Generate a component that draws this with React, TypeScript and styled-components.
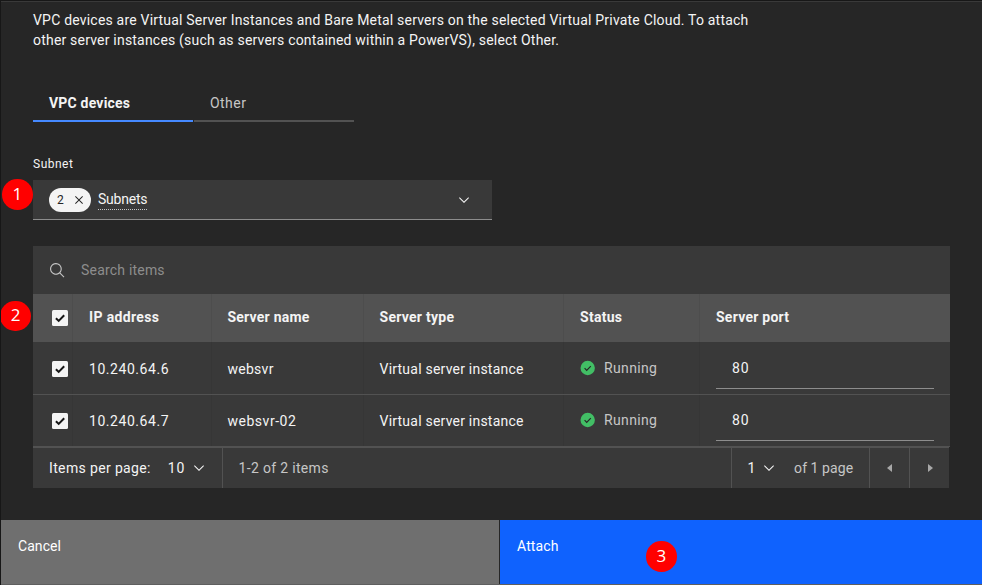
import React from "react";
import styled, { createGlobalStyle } from "styled-components";

const GlobalStyle = createGlobalStyle`
  *, *::before, *::after { box-sizing: border-box; }
  body {
    margin: 0;
    background: #262626;
    color: #f4f4f4;
    font-family: Roboto, "Liberation Sans", sans-serif;
    font-size: 14px;
    line-height: 20px;
  }
  button, input { font: inherit; color: inherit; }
`;

const Panel = styled.main`
  position: relative;
  display: flex;
  flex-direction: column;
  width: 982px;
  height: 585px;
  overflow: hidden;
  background: #262626;
  border-left: 1px solid #171717;
  border-top: 1px solid #171717;
`;

const Content = styled.section`
  flex: 1;
  padding: 8px 32px 0;
  border-top: 1px solid #393939;
`;

const Text = styled.span<{ $track?: number; $muted?: boolean }>`
  letter-spacing: ${(p) => p.$track ?? 0.2}px;
  color: ${(p) => (p.$muted ? "#c6c6c6" : "inherit")};
  white-space: nowrap;
`;

const Description = styled.p`
  margin: 0;
  letter-spacing: 0.2px;
  white-space: nowrap;
`;

const Tabs = styled.nav`
  display: flex;
  gap: 1px;
  margin-top: 32px;
`;

const Tab = styled.button<{ $active?: boolean }>`
  width: 160px;
  height: 40px;
  padding: 3px 16px 0;
  text-align: left;
  background: none;
  border: 0;
  border-bottom: 2px solid ${(p) => (p.$active ? "#4589ff" : "#525252")};
  color: ${(p) => (p.$active ? "#f4f4f4" : "#c6c6c6")};
  font-weight: ${(p) => (p.$active ? 700 : 400)};
`;

const FieldLabel = styled.label`
  display: block;
  margin: 34px 0 8px;
  font-size: 12px;
  line-height: 16px;
  letter-spacing: 0.5px;
`;

const Select = styled.div`
  display: flex;
  align-items: center;
  width: 459px;
  height: 40px;
  padding: 0 20px 0 16px;
  background: #393939;
  border-bottom: 1px solid #8d8d8d;
`;

const Tag = styled.span`
  display: flex;
  align-items: center;
  justify-content: space-between;
  width: 42px;
  height: 24px;
  margin-right: 7px;
  padding: 0 4px 0 8px;
  border-radius: 12px;
  background: #f4f4f4;
  color: #262626;
  font-size: 12px;
`;

const SelectValue = styled(Text)`
  flex: 1;
  span {
    display: inline-block;
    height: 20px;
    line-height: 18px;
    border-bottom: 1px dotted #c6c6c6;
  }
`;

const TableBox = styled.div`
  width: 917px;
  margin-top: 26px;
`;

const SearchBar = styled.div`
  display: flex;
  align-items: center;
  gap: 15px;
  height: 48px;
  padding: 0 16px;
  background: #393939;
  color: #8d8d8d;
  svg { color: #c6c6c6; }
`;

const Row = styled.div<{ $head?: boolean; $height: number }>`
  display: grid;
  grid-template-columns: 40px 139px 152px 200px 136px 250px;
  height: ${(p) => p.$height}px;
  background: ${(p) => (p.$head ? "#525252" : "#393939")};
  border-bottom: ${(p) => (p.$head ? "0" : "1px solid #525252")};
  font-weight: ${(p) => (p.$head ? 700 : 400)};
`;

const Cell = styled.div<{ $head?: boolean; $last?: boolean; $drop?: number; $lift?: number; $pull?: number }>`
  display: flex;
  align-items: center;
  gap: 8px;
  padding: ${(p) => p.$drop ?? 0}px 0 ${(p) => p.$lift ?? (p.$head ? 2 : 0)}px ${(p) => 16 - (p.$pull ?? 0)}px;
  border-right: ${(p) => (p.$last ? "0" : `1px solid ${p.$head ? "#4d4d4d" : "#363636"}`)};
`;

const CheckCell = styled(Cell)`
  padding-left: 19px;
  padding-bottom: 0;
`;

const CheckMark = styled.span`
  display: flex;
  width: 16px;
  height: 16px;
  flex: none;
  border-radius: 1.5px;
  background: #f4f4f4;
  color: #161616;
`;

const PortInput = styled.input`
  width: 218px;
  height: 40px;
  padding: 0 16px 1px;
  background: #393939;
  border: 0;
  border-bottom: 1px solid #8d8d8d;
  border-radius: 0;
  outline: 0;
  letter-spacing: 0.9px;
`;

const Pagination = styled.div`
  display: flex;
  width: 916px;
  height: 41px;
  background: #393939;
  border-top: 1px solid #525252;
`;

const PageSection = styled.div<{ $width?: number; $left?: number; $divided?: boolean }>`
  display: flex;
  align-items: center;
  flex: ${(p) => (p.$width ? "none" : 1)};
  width: ${(p) => (p.$width ? `${p.$width}px` : "auto")};
  padding: 0 0 0 ${(p) => p.$left ?? 0}px;
  border-left: ${(p) => (p.$divided ? "1px solid #525252" : "0")};
`;

const PageSelect = styled.span<{ $before: number; $gap: number }>`
  display: flex;
  align-items: center;
  gap: ${(p) => p.$gap}px;
  margin-left: ${(p) => p.$before}px;
`;

const PageTotal = styled(Text)`
  margin-left: 17px;
`;

const PageButton = styled.button`
  display: flex;
  align-items: center;
  justify-content: center;
  width: 40px;
  padding: 0;
  background: none;
  border: 0;
  border-left: 1px solid #525252;
  color: #a8a8a8;
`;

const Footer = styled.footer`
  display: flex;
  gap: 1px;
  height: 65px;
  border-bottom: 1px solid #5f5f5f;
`;

const ActionButton = styled.button<{ $primary?: boolean }>`
  display: flex;
  flex: ${(p) => (p.$primary ? 1 : "none")};
  width: ${(p) => (p.$primary ? "auto" : "498px")};
  padding: 16px 17px;
  border: 0;
  color: #fff;
  background: ${(p) => (p.$primary ? "#0f62fe" : "#6f6f6f")};
`;

const Callout = styled.span<{ $x: number; $y: number }>`
  position: absolute;
  left: ${(p) => p.$x}px;
  top: ${(p) => p.$y}px;
  display: flex;
  align-items: center;
  justify-content: center;
  width: 30.6px;
  height: 30.6px;
  padding-bottom: 2px;
  border-radius: 50%;
  background: #ff0000;
  color: #fff;
  font: 17px/1 "Open Sans", "Noto Sans", sans-serif;
`;

const Icon = ({ d, size = 16, box = 32 }: { d: string; size?: number; box?: number }) => (
  <svg width={size} height={size} viewBox={`0 0 ${box} ${box}`} fill="currentColor">
    <path d={d} />
  </svg>
);

const CHEVRON = "M8 11L3 6 3.7 5.3 8 9.6 12.3 5.3 13 6z";
const CLOSE =
  "M24 9.4L22.6 8 16 14.6 9.4 8 8 9.4 14.6 16 8 22.6 9.4 24 16 17.4 22.6 24 24 22.6 17.4 16 24 9.4z";
const SEARCH =
  "M29,27.5859l-7.5521-7.5521a11.0177,11.0177,0,1,0-1.4141,1.4141L27.5859,29ZM4,13a9,9,0,1,1,9,9A9.01,9.01,0,0,1,4,13Z";
const CARET_LEFT = "M20 24L10 16 20 8z";
const CARET_RIGHT = "M12 8L22 16 12 24z";

const Check = () => (
  <CheckMark role="checkbox" aria-checked="true">
    <svg width="16" height="16" viewBox="0 0 16 16" fill="none" stroke="currentColor" strokeWidth="2">
      <path d="M3.9 8.2L6.7 10.9L12.2 5.2" />
    </svg>
  </CheckMark>
);

const RunningIcon = () => (
  <svg width="16" height="16" viewBox="0 0 16 16" fill="none">
    <circle cx="7.7" cy="8" r="7.2" fill="#42be65" />
    <path d="M4.6 8.2L6.7 10.3L10.8 6.2" stroke="#262626" strokeWidth="1.2" />
  </svg>
);

const servers = [
  { ip: "10.240.64.6", name: "websvr", track: 0.29, height: 53, statusLift: 0, portDrop: 2 },
  { ip: "10.240.64.7", name: "websvr-02", track: 0.54, height: 52, statusLift: 1, portDrop: 1 },
];

export default function App() {
  return (
    <>
      <GlobalStyle />
      <Panel>
        <Content>
          <Description>
            VPC devices are Virtual Server Instances and Bare Metal servers on the selected Virtual Private Cloud. To attach
            <br />
            other server instances (such as servers contained within a PowerVS), select Other.
          </Description>
          <Tabs>
            <Tab $active><Text>VPC devices</Text></Tab>
            <Tab><Text $track={0.45}>Other</Text></Tab>
          </Tabs>
          <FieldLabel>Subnet</FieldLabel>
          <Select>
            <Tag><span>2</span><Icon d={CLOSE} /></Tag>
            <SelectValue $track={-0.22}><span>Subnets</span></SelectValue>
            <Icon d={CHEVRON} box={16} />
          </Select>

          <TableBox>
            <SearchBar>
              <Icon d={SEARCH} size={17} />
              <Text>Search items</Text>
            </SearchBar>
            <Row $head $height={48}>
              <CheckCell $head><Check /></CheckCell>
              <Cell $head><Text $track={0.35}>IP address</Text></Cell>
              <Cell $head $pull={0.6}><Text $track={0.24}>Server name</Text></Cell>
              <Cell $head $pull={0.5}><Text $track={0.27}>Server type</Text></Cell>
              <Cell $head><Text $track={0.27}>Status</Text></Cell>
              <Cell $head $last><Text $track={0.24}>Server port</Text></Cell>
            </Row>
            {servers.map((s) => (
              <Row key={s.ip} $height={s.height}>
                <CheckCell $drop={1}><Check /></CheckCell>
                <Cell $drop={1}><Text $track={0.55}>{s.ip}</Text></Cell>
                <Cell $drop={1} $pull={0.6}><Text $track={s.track}>{s.name}</Text></Cell>
                <Cell $drop={1} $pull={0.5}><Text $track={0.22}>Virtual server instance</Text></Cell>
                <Cell $lift={s.statusLift}><RunningIcon /><Text $track={0.36} $muted>Running</Text></Cell>
                <Cell $last $drop={s.portDrop}><PortInput defaultValue="80" aria-label="Server port" /></Cell>
              </Row>
            ))}
            <Pagination>
              <PageSection $width={189} $left={16}>
                <Text $track={0.36}>Items per page:</Text>
                <PageSelect $before={17} $gap={6}><Text $track={0.9}>10</Text><Icon d={CHEVRON} box={16} /></PageSelect>
              </PageSection>
              <PageSection $divided $left={15.5}><Text $track={0.33} $muted>1-2 of 2 items</Text></PageSection>
              <PageSection $divided $width={138}>
                <PageSelect $before={15.5} $gap={5.5}><Text>1</Text><Icon d={CHEVRON} box={16} /></PageSelect>
                <PageTotal $track={0.07} $muted>of 1 page</PageTotal>
              </PageSection>
              <PageButton aria-label="Previous page"><Icon d={CARET_LEFT} /></PageButton>
              <PageButton aria-label="Next page"><Icon d={CARET_RIGHT} /></PageButton>
            </Pagination>
          </TableBox>
        </Content>
        <Footer>
          <ActionButton><Text $track={0.07}>Cancel</Text></ActionButton>
          <ActionButton $primary><Text $track={0.13}>Attach</Text></ActionButton>
        </Footer>
        <Callout $x={1.2} $y={178}>1</Callout>
        <Callout $x={-0.8} $y={299.5}>2</Callout>
        <Callout $x={645.2} $y={540.3}>3</Callout>
      </Panel>
    </>
  );
}
